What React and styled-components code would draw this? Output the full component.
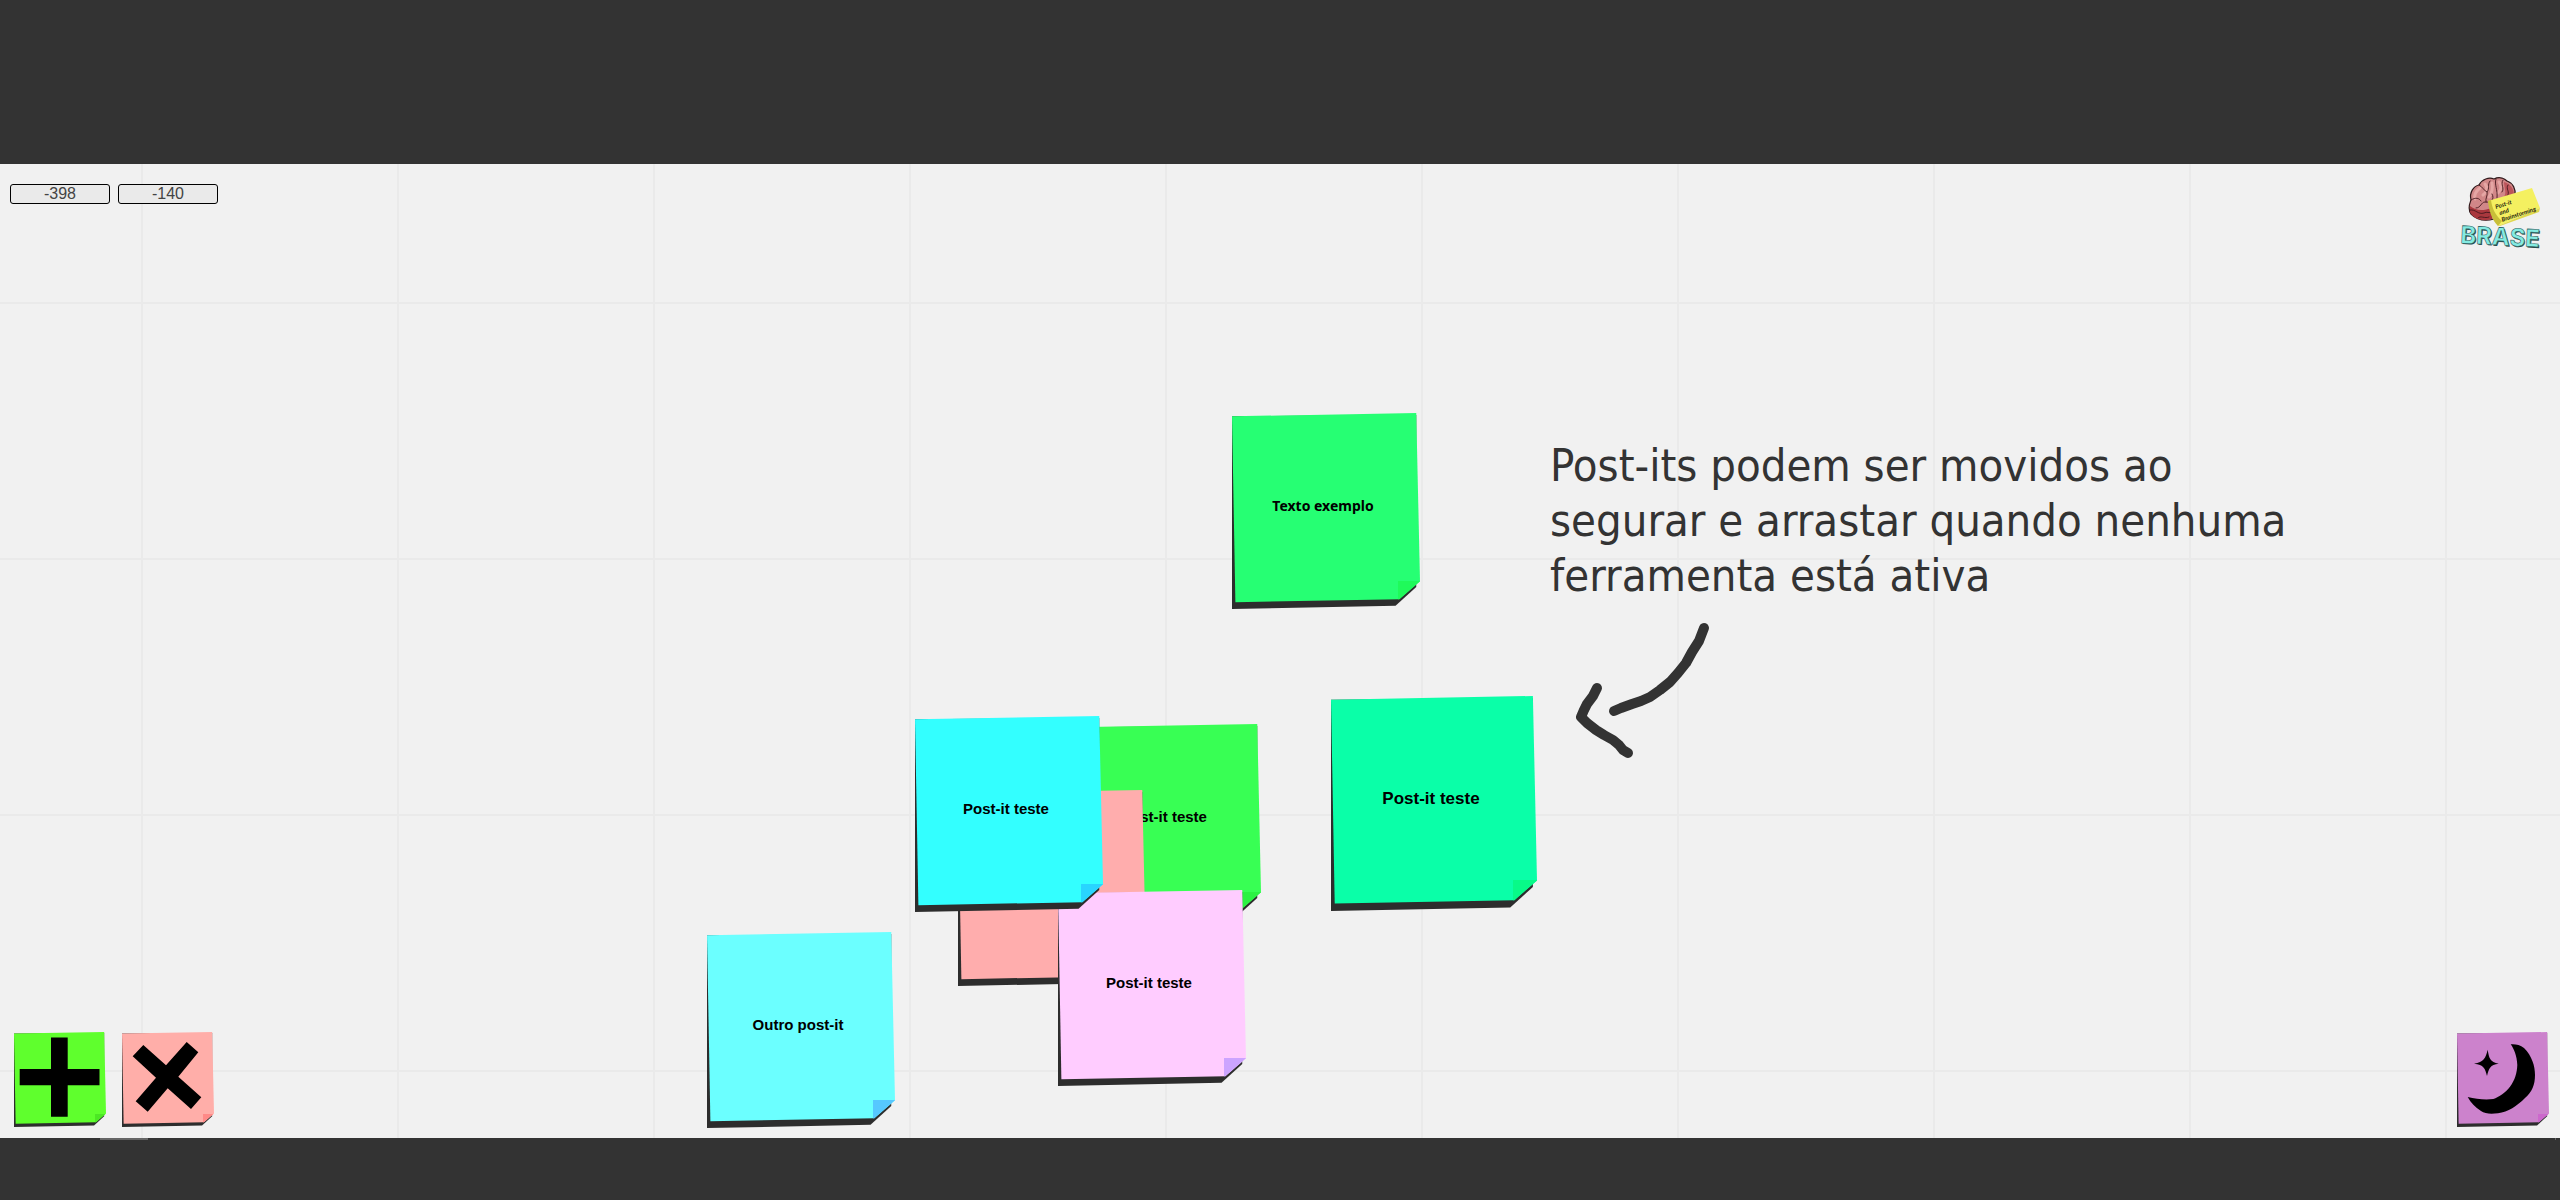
import React from "react";
import styled, { createGlobalStyle } from "styled-components";

const GlobalStyle = createGlobalStyle`
  *, *::before, *::after { box-sizing: border-box; }
  body {
    margin: 0;
    background: #333333;
    font-family: "Liberation Sans", Arial, sans-serif;
  }
`;

const Page = styled.div`
  display: flex;
  flex-direction: column;
  min-height: 100vh;
  padding-top: 164px;
  background: #333333;
`;

const Board = styled.main`
  position: relative;
  flex: 1;
  display: flex;
  flex-direction: column;
  justify-content: space-between;
  overflow: hidden;
  background-color: #f1f1f1;
  background-image:
    linear-gradient(to right, #eaeaea 2px, transparent 2px),
    linear-gradient(to bottom, #eaeaea 2px, transparent 2px);
  background-size: 256px 256px;
  background-position: 141px 138px;
`;

const TopBar = styled.header`
  display: flex;
  justify-content: space-between;
  align-items: flex-start;
  padding: 8px 14px 0 10px;
`;

const Coordinates = styled.form`
  display: flex;
  gap: 8px;
  padding-top: 12px;
`;

const CoordinateInput = styled.input`
  width: 100px;
  height: 20px;
  padding: 0;
  border: 1px solid #000;
  border-radius: 3px;
  background: #eaeaea;
  color: #444;
  font: 16px "Liberation Sans", Arial, sans-serif;
  text-align: center;
`;

const LogoImage = styled.svg`
  display: block;
  width: 90px;
  height: 80px;
  overflow: visible;
`;

const Toolbar = styled.nav`
  display: flex;
  justify-content: space-between;
  padding: 0 11px 11px 14px;
`;

const ToolGroup = styled.div`
  display: flex;
  gap: 16px;
`;

const paperShape = `
  &::before, &::after {
    content: "";
    position: absolute;
    inset: 0;
    z-index: -1;
  }
  &::before {
    background: #2d2d2d;
    clip-path: polygon(0 1.7%, 98% 1%, 98% 88.8%, 87% 98.4%, 0 100%);
  }
`;

const paperFill = (color, fold) => `
  &::after {
    background:
      linear-gradient(${fold}, ${fold}) right bottom / 11.7% 14.2% no-repeat,
      ${color};
    clip-path: polygon(0 1.7%, 98% 0, 100% 85.8%, 89% 95%, 1.8% 96.5%);
  }
`;

const ToolButton = styled.button`
  position: relative;
  isolation: isolate;
  width: 92px;
  height: 95px;
  padding: 0;
  border: 0;
  background: none;
  cursor: pointer;
  ${paperShape}
  ${({ $color, $fold }) => paperFill($color, $fold)}
`;

const Glyph = styled.svg`
  display: block;
  width: 100%;
  height: 100%;
`;

const Note = styled.article`
  position: absolute;
  left: ${({ $x }) => $x}px;
  top: ${({ $y }) => $y}px;
  isolation: isolate;
  display: flex;
  align-items: center;
  justify-content: center;
  width: ${({ $large }) => ($large ? 206 : 188)}px;
  height: ${({ $large }) => ($large ? 215 : 196)}px;
  padding: 0 6px 10px 0;
  color: #000;
  cursor: grab;
  ${paperShape}
  ${({ $color, $fold }) => paperFill($color, $fold)}
`;

const NoteText = styled.p`
  margin: 0;
  font-family: ${({ $humanist }) =>
    $humanist ? '"Noto Sans", sans-serif' : '"Liberation Sans", Arial, sans-serif'};
  font-size: ${({ $size }) => $size}px;
  font-weight: bold;
  line-height: 20px;
`;

const Hint = styled.aside`
  position: absolute;
  left: 1550px;
  top: 274px;
  width: 780px;
  color: #333;
`;

const HintText = styled.p`
  margin: 0;
  font-family: "DejaVu Sans Condensed", "DejaVu Sans", sans-serif;
  font-size: 45px;
  line-height: 55px;
`;

const Arrow = styled.svg`
  display: block;
  width: 160px;
  height: 150px;
  margin: 16px 0 0 20px;
`;

const BottomBar = styled.footer`
  display: flex;
  justify-content: space-between;
  height: 62px;
  padding: 0 4px 0 100px;
`;

const Handle = styled.span`
  width: ${({ $width }) => $width}px;
  height: 2px;
  background: #666;
`;

const notes = [
  { x: 1232, y: 249, color: "#26ff73", fold: "#1ffa5a", text: "Texto exemplo", size: 14, humanist: true },
  { x: 1331, y: 532, color: "#0affa8", fold: "#08fa88", text: "Post-it teste", size: 17, large: true },
  { x: 1073, y: 560, color: "#38ff54", fold: "#2df243", text: "Post-it teste", size: 15 },
  { x: 958, y: 626, color: "#ffadad", fold: "#ff8888", text: "", size: 15 },
  { x: 1058, y: 726, color: "#ffccff", fold: "#cca4ff", text: "Post-it teste", size: 15 },
  { x: 915, y: 552, color: "#33ffff", fold: "#29d5ff", text: "Post-it teste", size: 15 },
  { x: 707, y: 768, color: "#6bffff", fold: "#56c8ff", text: "Outro post-it", size: 15 },
];

function Logo() {
  return (
    <LogoImage viewBox="0 0 90 80" role="img" aria-label="BRASE">
      <path
        d="M15 42C11 36 14 31 15 28C13 20 18 14 23 13C26 7 33 5 38 7C44 4 49 7 51 9C57 11 60 17 59 24C61 29 58 33 56 35L38 47C31 49 22 49 15 42Z"
        fill="#d18788" stroke="#30191b" strokeWidth="1.2"
      />
      <path d="M14 34C20 39 27 39 36 36V47C27 50 17 47 14 40Z" fill="#a9383e" />
      <path d="M48 10C56 12 59 19 58 27L48 25C51 20 48 16 48 10Z" fill="#bd555b" />
      <g fill="none" stroke="#e5a6a4" strokeWidth="3" strokeLinecap="round">
        <path d="M24 16C20 19 18 23 19 27M29 12C32 16 31 20 27 23M36 11C37 17 36 21 33 25M43 10C46 14 45 18 42 21" />
      </g>
      <g fill="none" stroke="#45191e" strokeWidth="0.9" strokeLinecap="round">
        <path d="M40 7C38 13 42 17 41 26M23 13C27 15 28 19 31 20M34 9C31 13 34 16 31 20C32 24 29 26 30 30M15 28C20 25 23 26 25 29M36 22C39 27 35 31 29 30C25 30 25 36 20 36M47 8C44 13 49 16 46 20M52 13C49 17 55 20 51 24M14 38C20 37 22 43 28 41C31 39 33 42 36 40M22 46C24 43 29 47 33 45" />
      </g>
      <path d="M32 29L76 16L84 36L42 54Z" fill="#f4f060" />
      <path d="M32 29C33 39 36 48 42 54L46 49C39 43 36 36 35 28Z" fill="#c8bf39" />
      <path d="M42 54L84 36L83 40L44 54Z" fill="#e0d84c" />
      <g
        transform="rotate(-18 40 37)" fill="#22200c"
        fontFamily="Lato, sans-serif" fontStyle="italic" fontWeight="bold"
      >
        <text x="40" y="37" fontSize="6">Post-it</text>
        <text x="42" y="44" fontSize="6">and</text>
        <text x="42" y="51" fontSize="6">Brainstorming</text>
      </g>
      <g
        transform="rotate(3 5 71)" fontFamily="Inter, sans-serif" fontWeight="bold" fontSize="24"
        strokeLinejoin="round"
      >
        <text x="5" y="72" fill="#27494a">BRASE</text>
        <text x="4" y="71" fill="#84ebe2" stroke="#316463" strokeWidth="0.6">BRASE</text>
      </g>
    </LogoImage>
  );
}

export default function App() {
  return (
    <>
      <GlobalStyle />
      <Page>
        <Board>
          <TopBar>
            <Coordinates>
              <CoordinateInput aria-label="X" defaultValue="-398" />
              <CoordinateInput aria-label="Y" defaultValue="-140" />
            </Coordinates>
            <Logo />
          </TopBar>

          {notes.map((n) => (
            <Note key={`${n.x}-${n.y}`} $x={n.x} $y={n.y} $color={n.color} $fold={n.fold} $large={n.large}>
              <NoteText $size={n.size} $humanist={n.humanist}>{n.text}</NoteText>
            </Note>
          ))}

          <Hint>
            <HintText>
              Post-its podem ser movidos ao segurar e arrastar quando nenhuma ferramenta está ativa
            </HintText>
            <Arrow viewBox="1570 619 160 150" fill="none" stroke="#333" strokeWidth="10" strokeLinecap="round" strokeLinejoin="round">
              <path d="M1704 628L1699 641L1692 652L1686 663L1678 673L1670 682L1660 690L1650 697L1641 701L1632 704L1621 708L1614 711" />
              <path d="M1597 688L1593 696L1587 704L1584 710L1581 717L1587 723L1596 730L1604 735L1613 740L1619 745L1623 750L1628 753" />
            </Arrow>
          </Hint>

          <Toolbar>
            <ToolGroup>
              <ToolButton aria-label="Adicionar" $color="#5fff2d" $fold="#4ce824">
                <Glyph viewBox="0 0 92 95">
                  <path d="M37 5.5H53.7V37H85.5V53.3H53.7V84.7H37V53.3H5.7V37H37Z" />
                </Glyph>
              </ToolButton>
              <ToolButton aria-label="Remover" $color="#ffaea9" $fold="#ff8a88">
                <Glyph viewBox="0 0 92 95">
                  <path d="M21.3 13L44 33.3L64.7 10L76.3 20.3L56.3 44.7L79.3 65.3L69 77L45.7 56.3L25.7 79.7L13.7 69.3L34 45.7L10.7 24.3Z" />
                </Glyph>
              </ToolButton>
            </ToolGroup>
            <ToolButton aria-label="Modo noturno" $color="#cc82cc" $fold="#cc68cc">
              <Glyph viewBox="0 0 92 95">
                <path d="M53.7 12.3C58 12 63 12.5 67 16C75 24 78 34 78 43C78 53 75 60 68 66C60 74 51 80 41 81.3C34 82 28 82 24 79C18 75 14 71 10.7 65C19 67 28 68 36.3 67C42 65 49 60 53 54.7C58 48 60 41 60.3 33C60 24 57 17 53.7 12.3Z" />
                <path d="M30.7 17.7C32 26 33 30 41.7 31.7C33 33 32 36 30 44C28 36 27 33 17 31.7C27 30 28.5 26 30.7 17.7Z" />
              </Glyph>
            </ToolButton>
          </Toolbar>
        </Board>
        <BottomBar>
          <Handle $width={48} />
          <Handle $width={1} />
        </BottomBar>
      </Page>
    </>
  );
}
